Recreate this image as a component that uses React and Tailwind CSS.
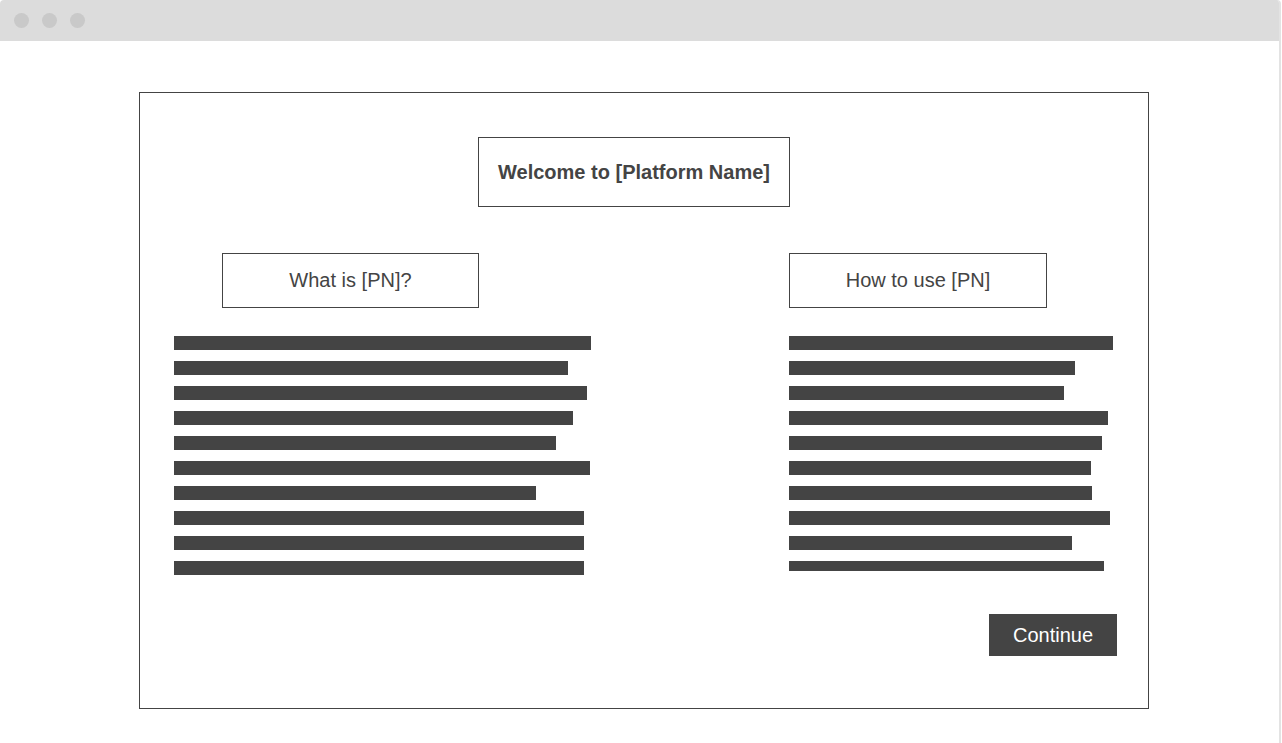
const leftBars = [417, 394, 413, 399, 382, 416, 362, 410, 410, 410];
const rightBars = [324, 286, 275, 319, 313, 302, 303, 321, 283, 315];

function Bars({ widths, lastThin }) {
  return (
    <div className="flex flex-col gap-[11px]">
      {widths.map((w, i) => (
        <div
          key={i}
          className={`bg-[#444444] ${lastThin && i === widths.length - 1 ? "h-[10px]" : "h-[14px]"}`}
          style={{ width: w }}
        />
      ))}
    </div>
  );
}

export default function App() {
  return (
    <div
      className="w-[1282px] h-[743px] bg-white overflow-hidden"
      style={{ fontFamily: '"Liberation Sans", Arial, sans-serif' }}
    >
      <div className="w-[1281px] h-[743px] border-r-2 border-[#e3e3e3] rounded-tl-[4px] rounded-tr-[4px] overflow-hidden">
        <div className="h-[41px] bg-[#dcdcdc] flex items-center gap-[13px] pl-[14px]">
          <div className="w-[15px] h-[15px] rounded-full bg-[#c9c9c9]" />
          <div className="w-[15px] h-[15px] rounded-full bg-[#c9c9c9]" />
          <div className="w-[15px] h-[15px] rounded-full bg-[#c9c9c9]" />
        </div>
        <div className="pt-[51px] pl-[139px]">
          <div className="w-[1010px] h-[617px] border border-[#444444] flex flex-col">
            <div className="mt-[44px] ml-[338px] w-[312px] h-[70px] border border-[#444444] flex items-center justify-center text-[20px] font-bold text-[#444444]">
              Welcome to [Platform Name]
            </div>
            <div className="flex mt-[46px] pl-[34px]">
              <div className="flex flex-col w-[615px]">
                <div className="ml-[48px] w-[257px] h-[55px] border border-[#444444] flex items-center justify-center text-[20px] text-[#444444] pb-[1px]">
                  What is [PN]?
                </div>
                <div className="mt-[28px]">
                  <Bars widths={leftBars} />
                </div>
              </div>
              <div className="flex flex-col">
                <div className="w-[258px] h-[55px] border border-[#444444] flex items-center justify-center text-[20px] text-[#444444] pb-[1px]">
                  How to use [PN]
                </div>
                <div className="mt-[28px]">
                  <Bars widths={rightBars} lastThin />
                </div>
                <div className="mt-[43px] ml-[200px] w-[128px] h-[42px] bg-[#444444] text-white text-[20px] flex items-center justify-center">
                  Continue
                </div>
              </div>
            </div>
          </div>
        </div>
      </div>
    </div>
  );
}
